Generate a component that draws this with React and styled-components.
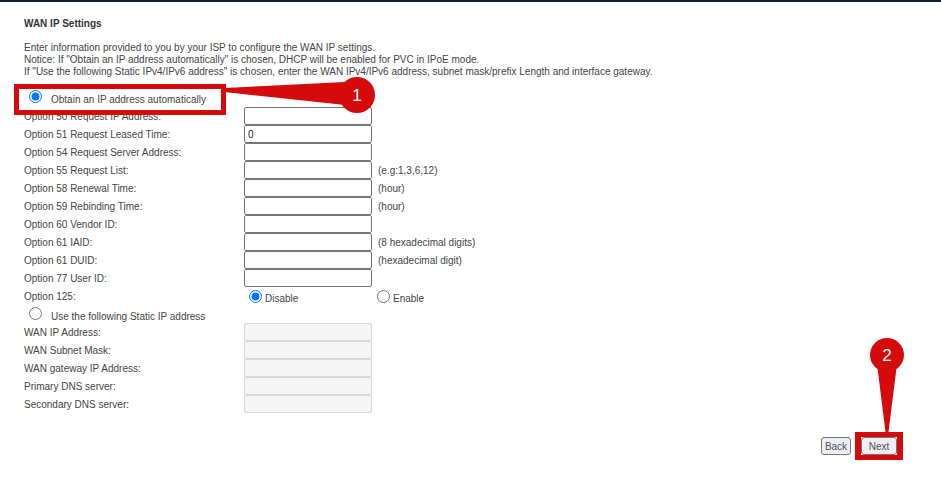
import React from "react";
import styled, { createGlobalStyle } from "styled-components";

const GlobalStyle = createGlobalStyle`
  html, body {
    margin: 0;
    padding: 0;
    background: #ffffff;
  }
  body {
    font-family: "Liberation Sans", Arial, sans-serif;
    font-size: 10px;
    color: #444444;
  }
`;

const RED = "#d50b0b";

const Page = styled.div`
  position: relative;
  width: 941px;
  height: 478px;
  box-sizing: border-box;
  border-top: 2px solid #111a2e;
  padding: 16px 38px 0 24px;
  overflow: hidden;
`;

const Title = styled.div`
  font-weight: bold;
  color: #333333;
  line-height: 12px;
`;

const Intro = styled.div`
  margin-top: 12px;
  margin-bottom: 11px;
  line-height: 12px;
`;

const RadioRow = styled.div`
  position: relative;
  height: 18px;
  display: flex;
  align-items: center;
  z-index: ${(p) => (p.$marked ? 2 : "auto")};

  &::before {
    content: "";
    display: ${(p) => (p.$marked ? "block" : "none")};
    position: absolute;
    left: -10px;
    top: -5px;
    width: 212px;
    height: 31px;
    box-sizing: border-box;
    border: 5px solid ${RED};
    background: #ffffff;
    z-index: -1;
  }
`;

const Radio = styled.input.attrs({ type: "radio", readOnly: true })`
  width: 13px;
  height: 13px;
  margin: ${(p) => p.$margin || "0 3px 0 5px"};
  accent-color: #0075ff;
  flex: none;
`;

const RadioText = styled.span`
  margin-left: ${(p) => p.$gap || 0}px;
  padding-top: ${(p) => p.$drop || 0}px;
  line-height: 12px;
`;

const Grid = styled.div`
  display: grid;
  grid-template-columns: 220px 128px auto;
  grid-auto-rows: 18px;
  align-items: center;
`;

const Label = styled.div`
  line-height: 12px;
  padding-top: 2px;
`;

const Field = styled.input`
  width: 128px;
  height: 18px;
  box-sizing: border-box;
  margin: 0;
  padding: 0 3px;
  font-family: "Liberation Sans", Arial, sans-serif;
  font-size: 10px;
  color: #222222;
  border: 1px solid ${(p) => (p.disabled ? "#d8d8d8" : "#767676")};
  border-radius: 2px;
  background: ${(p) => (p.disabled ? "#f5f5f5" : "#ffffff")};
  outline: none;
`;

const Hint = styled.div`
  padding-left: 6px;
  padding-top: 2px;
  line-height: 12px;
  white-space: nowrap;
`;

const Choice = styled.label`
  display: flex;
  align-items: center;
  height: 18px;
`;

const Footer = styled.div`
  margin-top: 19px;
  display: flex;
  justify-content: flex-end;
  align-items: center;
`;

const Button = styled.button`
  width: ${(p) => p.$w}px;
  height: 18px;
  padding: 0;
  box-sizing: border-box;
  font-family: "Liberation Sans", Arial, sans-serif;
  font-size: 10px;
  color: #4a5068;
  background: #efefef;
  border: 1px solid #767676;
  border-radius: 3px;
  margin: 0;
`;

const Marked = styled.span`
  display: inline-flex;
  margin-left: 4px;
  border: 5px solid ${RED};
  border-left-width: 6px;
  border-right-width: 6px;
  padding: 0;
  background: #ffffff;
`;

const Callout = styled.svg`
  position: absolute;
  left: ${(p) => p.$x}px;
  top: ${(p) => p.$y}px;
  overflow: visible;
  z-index: 3;
`;

const dhcpRows = [
  ["Option 50 Request IP Address:", "", ""],
  ["Option 51 Request Leased Time:", "0", ""],
  ["Option 54 Request Server Address:", "", ""],
  ["Option 55 Request List:", "", "(e.g:1,3,6,12)"],
  ["Option 58 Renewal Time:", "", "(hour)"],
  ["Option 59 Rebinding Time:", "", "(hour)"],
  ["Option 60 Vendor ID:", "", ""],
  ["Option 61 IAID:", "", "(8 hexadecimal digits)"],
  ["Option 61 DUID:", "", "(hexadecimal digit)"],
  ["Option 77 User ID:", "", ""],
];

const staticRows = [
  "WAN IP Address:",
  "WAN Subnet Mask:",
  "WAN gateway IP Address:",
  "Primary DNS server:",
  "Secondary DNS server:",
];

const App = () => {
  return (
    <Page>
      <GlobalStyle />
      <Title>WAN IP Settings</Title>
      <Intro>
        Enter information provided to you by your ISP to configure the WAN IP
        settings.
        <br />
        Notice: If "Obtain an IP address automatically" is chosen, DHCP will be
        enabled for PVC in IPoE mode.
        <br />
        If "Use the following Static IPv4/IPv6 address" is chosen, enter the WAN
        IPv4/IPv6 address, subnet mask/prefix Length and interface gateway.
      </Intro>

      <RadioRow $marked>
        <Radio name="mode" defaultChecked $margin="0 3px 3px 5px" />
        <RadioText $gap={6} $drop={4}>
          Obtain an IP address automatically
        </RadioText>
      </RadioRow>

      <Grid>
        {dhcpRows.map(([label, value, hint]) => (
          <React.Fragment key={label}>
            <Label>{label}</Label>
            <Field defaultValue={value} />
            <Hint>{hint}</Hint>
          </React.Fragment>
        ))}
        <Label>Option 125:</Label>
        <Choice>
          <Radio name="opt125" defaultChecked />
          <RadioText $drop={5}>Disable</RadioText>
        </Choice>
        <Choice>
          <Radio name="opt125" />
          <RadioText $drop={5}>Enable</RadioText>
        </Choice>
      </Grid>

      <RadioRow>
        <Radio name="mode" $margin="0 3px 1px 5px" />
        <RadioText $gap={6} $drop={6}>
          Use the following Static IP address
        </RadioText>
      </RadioRow>

      <Grid>
        {staticRows.map((label) => (
          <React.Fragment key={label}>
            <Label>{label}</Label>
            <Field disabled />
            <Hint />
          </React.Fragment>
        ))}
      </Grid>

      <Footer>
        <Button $w={30}>Back</Button>
        <Marked>
          <Button $w={36}>Next</Button>
        </Marked>
      </Footer>

      <Callout $x={222} $y={72} width="160" height="42" viewBox="222 72 160 42">
        <polygon points="224,86 345,80 345,103 224,90" fill={RED} />
        <circle cx="357" cy="93" r="18" fill={RED} />
        <text
          x="357"
          y="99"
          textAnchor="middle"
          fill="#ffffff"
          fontSize="17"
          fontFamily="Liberation Sans, Arial, sans-serif"
        >
          1
        </text>
      </Callout>

      <Callout $x={868} $y={334} width="40" height="102" viewBox="868 334 40 102">
        <polygon points="877,362 897,362 888,434 886,434" fill={RED} />
        <circle cx="887" cy="353" r="17" fill={RED} />
        <text
          x="887"
          y="359"
          textAnchor="middle"
          fill="#ffffff"
          fontSize="17"
          fontFamily="Liberation Sans, Arial, sans-serif"
        >
          2
        </text>
      </Callout>
    </Page>
  );
};

export default App;
